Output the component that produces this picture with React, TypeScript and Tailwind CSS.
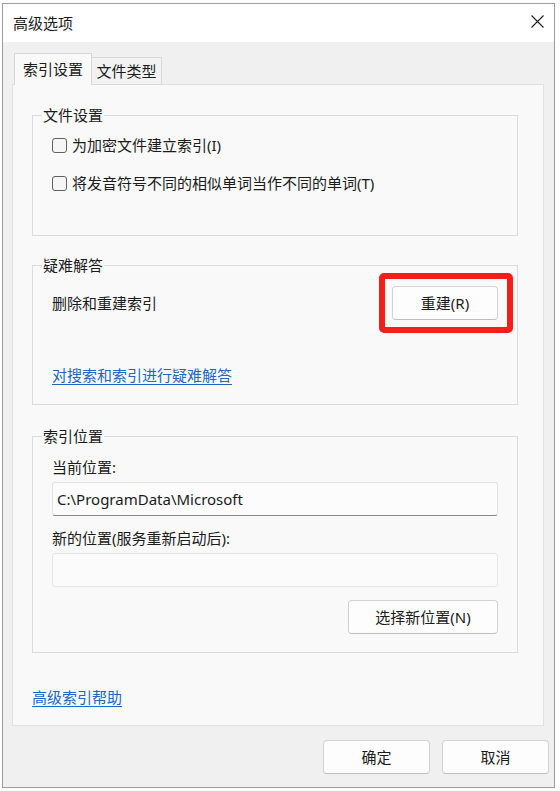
import React from 'react'

const font = "font-['Noto_Sans','Noto_Sans_CJK_SC',sans-serif]"

function GroupTitle({ children }: { children: React.ReactNode }) {
  return (
    <span className="-mt-[11px] ml-[9px] w-fit bg-[#f9f9f9] px-[1px] leading-[20px]">{children}</span>
  )
}

function Checkbox({ label, className }: { label: string; className?: string }) {
  return (
    <label className={`flex items-center gap-[5px] leading-[20px] ${className ?? ''}`}>
      <span className="h-[15px] w-[15px] rounded-[3px] border border-[#606060] bg-[#f6f6f6]" />
      {label}
    </label>
  )
}

function Button({ children, className }: { children: React.ReactNode; className?: string }) {
  return (
    <button
      className={`flex h-[34px] items-center justify-center rounded-[4px] border border-[#d3d3d3] border-b-[#bfbfbf] bg-[#fdfdfd] text-[15px] leading-[20px] text-[#1b1b1b] ${className ?? ''}`}
    >
      {children}
    </button>
  )
}

export default function App() {
  return (
    <div className={`h-[791px] w-[560px] bg-white pl-[2px] pt-[3px] text-[15px] text-[#1b1b1b] ${font}`}>
      <div className="flex h-[785px] w-[553px] flex-col border border-[#9c9c9c] bg-[#f0f0f0]">
        {/* title bar */}
        <div className="flex h-[38px] shrink-0 items-center justify-between bg-white pl-[10px] pr-[10px]">
          <span className="leading-[20px]">高级选项</span>
          <svg width="13" height="13" viewBox="0 0 13 13" className="mb-[3px]">
            <path d="M0.5 0.5 L12.5 12.5 M12.5 0.5 L0.5 12.5" stroke="#1f1f1f" strokeWidth="1.1" />
          </svg>
        </div>

        {/* body */}
        <div className="flex flex-1 flex-col pl-[9px] pr-[10px] pt-[11px]">
          <div className="relative z-10 -mb-px flex h-[32px] items-end pl-[2px]">
            <div className="flex h-[32px] w-[78px] items-center border border-b-0 border-[#d6d6d6] bg-[#f9f9f9] pl-[8px] pb-[1px]">
              索引设置
            </div>
            <div className="flex h-[28px] w-[70px] items-center justify-center border border-l-0 border-[#d9d9d9] bg-[#f2f2f2]">
              文件类型
            </div>
          </div>

          <div className="flex h-[642px] flex-col border border-[#e0e0e0] bg-[#f9f9f9] pl-[19px] pr-[25px]">
            {/* 文件设置 */}
            <div className="mt-[30px] flex h-[121px] flex-col border border-[#dcdcdc]">
              <GroupTitle>文件设置</GroupTitle>
              <Checkbox className="ml-[19px] mt-[10px]" label="为加密文件建立索引(I)" />
              <Checkbox className="ml-[19px] mt-[18px]" label="将发音符号不同的相似单词当作不同的单词(T)" />
            </div>

            {/* 疑难解答 */}
            <div className="mt-[29px] flex h-[140px] flex-col border border-[#dcdcdc]">
              <GroupTitle>疑难解答</GroupTitle>
              <div className="mt-[11px] flex items-center justify-between pl-[19px] pr-[19px]">
                <span className="leading-[20px]">删除和重建索引</span>
                <div className="relative">
                  <Button className="w-[106px]">重建(R)</Button>
                  <div className="pointer-events-none absolute -bottom-[13px] -left-[13px] -right-[15px] -top-[13px] rounded-[5px] border-[6px] border-[#f41f1a]" />
                </div>
              </div>
              <a className="ml-[19px] mt-[45px] w-fit leading-[20px] text-[#1a66c9] underline underline-offset-[3px]">
                对搜索和索引进行疑难解答
              </a>
            </div>

            {/* 索引位置 */}
            <div className="mt-[31px] flex h-[217px] flex-col border border-[#dcdcdc] pl-[19px] pr-[19px]">
              <span className="-ml-[10px] -mt-[11px] w-fit bg-[#f9f9f9] px-[1px] leading-[20px]">索引位置</span>
              <span className="mt-[11px] leading-[20px]">当前位置:</span>
              <div className="mt-[5px] flex h-[34px] items-center rounded-[3px] border border-[#e3e3e3] border-b-[#8a8a8a] bg-[#fcfcfc] pl-[4px]">
                C:\ProgramData\Microsoft
              </div>
              <span className="mt-[12px] leading-[20px]">新的位置(服务重新启动后):</span>
              <div className="mt-[5px] h-[34px] rounded-[3px] border border-[#e6e6e6] bg-[#fbfbfb]" />
              <div className="mt-[13px] flex justify-end">
                <Button className="w-[150px]">选择新位置(N)</Button>
              </div>
            </div>

            <a className="mt-[34px] w-fit leading-[20px] text-[#1a66c9] underline underline-offset-[3px]">高级索引帮助</a>
          </div>

          <div className="mt-[14px] flex justify-end gap-[12px]">
            <Button className="w-[107px] border-[#5a96da] border-b-[#4a86cc]">确定</Button>
            <Button className="-mr-[5px] w-[107px]">取消</Button>
          </div>
        </div>
      </div>
    </div>
  )
}
